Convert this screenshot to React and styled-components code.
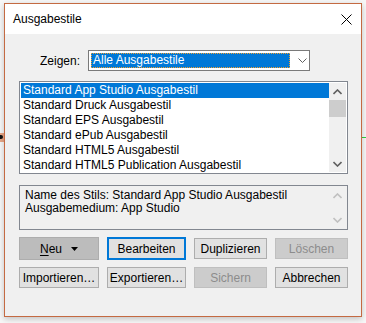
import React from 'react';
import styled, { createGlobalStyle } from 'styled-components';

const GlobalStyle = createGlobalStyle`
  html, body {
    margin: 0;
    padding: 0;
    background: #f7f7f7;
  }
  body {
    font-family: "Liberation Sans", Arial, sans-serif;
    font-size: 12px;
    color: #000;
  }
`;

const Desktop = styled.div`
  position: relative;
  width: 366px;
  height: 323px;
  overflow: hidden;
  padding: 3px 4px 0 4px;
  box-sizing: border-box;
`;

const GuideLine = styled.div`
  position: absolute;
  right: 0;
  top: 137px;
  width: 6px;
  height: 1px;
  background: #2ecc40;
`;

const Marker = styled.div`
  position: absolute;
  left: 0;
  top: 133px;
  width: 4px;
  height: 9px;
  background: #e8a787;
  &::after {
    content: '';
    position: absolute;
    left: 0;
    top: 2px;
    width: 3px;
    height: 4px;
    border-radius: 0 2px 2px 0;
    background: #111;
  }
`;

const Window = styled.div`
  position: relative;
  width: 358px;
  height: 314px;
  box-sizing: border-box;
  border: 1px solid #c46a42;
  background: #f0f0f0;
  box-shadow: 0 2px 6px rgba(0, 0, 0, 0.22);
  display: flex;
  flex-direction: column;
`;

const TitleBar = styled.div`
  height: 30px;
  background: #fff;
  display: flex;
  align-items: center;
  justify-content: space-between;
  padding: 0 9px 0 8px;
  font-size: 12px;
`;

const Title = styled.span`
  margin-top: -1px;
`;

const CloseButton = styled.svg`
  width: 11px;
  height: 11px;
  margin-top: 1px;
`;

const Body = styled.div`
  flex: 1;
  padding: 16px 13px 0 14px;
  display: flex;
  flex-direction: column;
`;

const ShowRow = styled.div`
  display: flex;
  align-items: center;
  height: 21px;
`;

const Label = styled.label`
  width: 69px;
  box-sizing: border-box;
  text-align: right;
  padding-right: 8px;
`;

const Combo = styled.div`
  width: 222px;
  height: 21px;
  box-sizing: border-box;
  border: 1px solid #7a7a7a;
  background: #fff;
  display: flex;
  align-items: center;
  padding: 0 0 0 2px;
`;

const ComboValue = styled.div`
  width: 199px;
  height: 15px;
  box-sizing: border-box;
  background: #0078d7;
  color: #fff;
  outline: 1px dotted #f0a030;
  outline-offset: -1px;
  padding-left: 2px;
  line-height: 14px;
`;

const ComboArrow = styled.svg`
  width: 9px;
  height: 5px;
  margin-left: 8px;
`;

const ListBox = styled.div`
  margin-top: 10px;
  height: 93px;
  box-sizing: border-box;
  border: 1px solid #828790;
  background: #fff;
  display: flex;
  padding: 1px;
`;

const Items = styled.ul`
  flex: 1;
  list-style: none;
  margin: 0;
  padding: 0;
`;

const Item = styled.li`
  height: 15px;
  line-height: 15px;
  padding-left: 2px;
  background: ${(p) => (p.$selected ? '#0078d7' : 'transparent')};
  color: ${(p) => (p.$selected ? '#fff' : '#000')};
  white-space: nowrap;
`;

const ScrollBar = styled.div`
  width: 17px;
  background: ${(p) => (p.$disabled ? 'transparent' : '#f0f0f0')};
  display: flex;
  flex-direction: column;
  align-items: stretch;
`;

const ScrollButton = styled.div`
  height: 17px;
  display: flex;
  align-items: center;
  justify-content: center;
`;

const ScrollTrack = styled.div`
  flex: 1;
  display: flex;
  flex-direction: column;
`;

const Thumb = styled.div`
  height: 17px;
  background: #cdcdcd;
`;

const InfoBox = styled.div`
  margin-top: 11px;
  height: 45px;
  box-sizing: border-box;
  border: 1px solid #828790;
  background: #f0f0f0;
  display: flex;
  padding: 1px;
`;

const InfoText = styled.div`
  flex: 1;
  padding: 2px 0 0 4px;
  line-height: 13px;
`;

const ButtonGrid = styled.div`
  margin-top: 7px;
  display: grid;
  grid-template-columns: 80px 79px 73px 73px;
  column-gap: 8px;
  row-gap: 7px;
  align-items: center;
`;

const Button = styled.button`
  font: inherit;
  height: ${(p) => (p.$tall ? '23px' : '21px')};
  padding: 0;
  box-sizing: border-box;
  border: ${(p) => (p.$focused ? '2px solid #0078d7' : '1px solid #adadad')};
  background: ${(p) => (p.$pressed ? '#bcbcbc' : p.$disabled ? '#cccccc' : '#e1e1e1')};
  border-color: ${(p) => (p.$disabled ? '#bfbfbf' : p.$focused ? '#0078d7' : '#adadad')};
  color: ${(p) => (p.$disabled ? '#8c8c8c' : '#000')};
  display: flex;
  align-items: center;
  justify-content: center;
  gap: 9px;
  cursor: default;
`;

const Underline = styled.span`
  text-decoration: underline;
  text-underline-offset: 2px;
`;

const Caret = styled.svg`
  width: 7px;
  height: 4px;
`;

const Up = ({ color }) => (
  <svg width="9" height="6" viewBox="0 0 9 6">
    <polyline points="0.5,5 4.5,1 8.5,5" fill="none" stroke={color} strokeWidth="1.6" />
  </svg>
);

const Down = ({ color }) => (
  <svg width="9" height="6" viewBox="0 0 9 6">
    <polyline points="0.5,1 4.5,5 8.5,1" fill="none" stroke={color} strokeWidth="1.6" />
  </svg>
);

const styles = [
  'Standard App Studio Ausgabestil',
  'Standard Druck Ausgabestil',
  'Standard EPS Ausgabestil',
  'Standard ePub Ausgabestil',
  'Standard HTML5 Ausgabestil',
  'Standard HTML5 Publication Ausgabestil',
];

export default function App() {
  return (
    <>
      <GlobalStyle />
      <Desktop>
        <GuideLine />
        <Marker />
        <Window>
          <TitleBar>
            <Title>Ausgabestile</Title>
            <CloseButton viewBox="0 0 11 11">
              <path d="M0.5 0.5 L10.5 10.5 M10.5 0.5 L0.5 10.5" stroke="#000" strokeWidth="1" />
            </CloseButton>
          </TitleBar>
          <Body>
            <ShowRow>
              <Label>Zeigen:</Label>
              <Combo>
                <ComboValue>Alle Ausgabestile</ComboValue>
                <ComboArrow viewBox="0 0 9 5">
                  <polyline points="0.5,0.5 4.5,4.5 8.5,0.5" fill="none" stroke="#606060" strokeWidth="1" />
                </ComboArrow>
              </Combo>
            </ShowRow>

            <ListBox>
              <Items>
                {styles.map((s, i) => (
                  <Item key={s} $selected={i === 0}>
                    {s}
                  </Item>
                ))}
              </Items>
              <ScrollBar>
                <ScrollButton>
                  <Up color="#606060" />
                </ScrollButton>
                <ScrollTrack>
                  <Thumb />
                </ScrollTrack>
                <ScrollButton>
                  <Down color="#606060" />
                </ScrollButton>
              </ScrollBar>
            </ListBox>

            <InfoBox>
              <InfoText>
                Name des Stils: Standard App Studio Ausgabestil
                <br />
                Ausgabemedium: App Studio
              </InfoText>
              <ScrollBar $disabled>
                <ScrollButton>
                  <Up color="#c0c0c0" />
                </ScrollButton>
                <ScrollTrack />
                <ScrollButton>
                  <Down color="#c0c0c0" />
                </ScrollButton>
              </ScrollBar>
            </InfoBox>

            <ButtonGrid>
              <Button $pressed $tall>
                <span>
                  <Underline>N</Underline>eu
                </span>
                <Caret viewBox="0 0 7 4">
                  <polygon points="0,0 7,0 3.5,4" fill="#000" />
                </Caret>
              </Button>
              <Button $focused $tall>Bearbeiten</Button>
              <Button>Duplizieren</Button>
              <Button $disabled>Löschen</Button>
              <Button>Importieren…</Button>
              <Button>Exportieren…</Button>
              <Button $disabled>Sichern</Button>
              <Button>Abbrechen</Button>
            </ButtonGrid>
          </Body>
        </Window>
      </Desktop>
    </>
  );
}
